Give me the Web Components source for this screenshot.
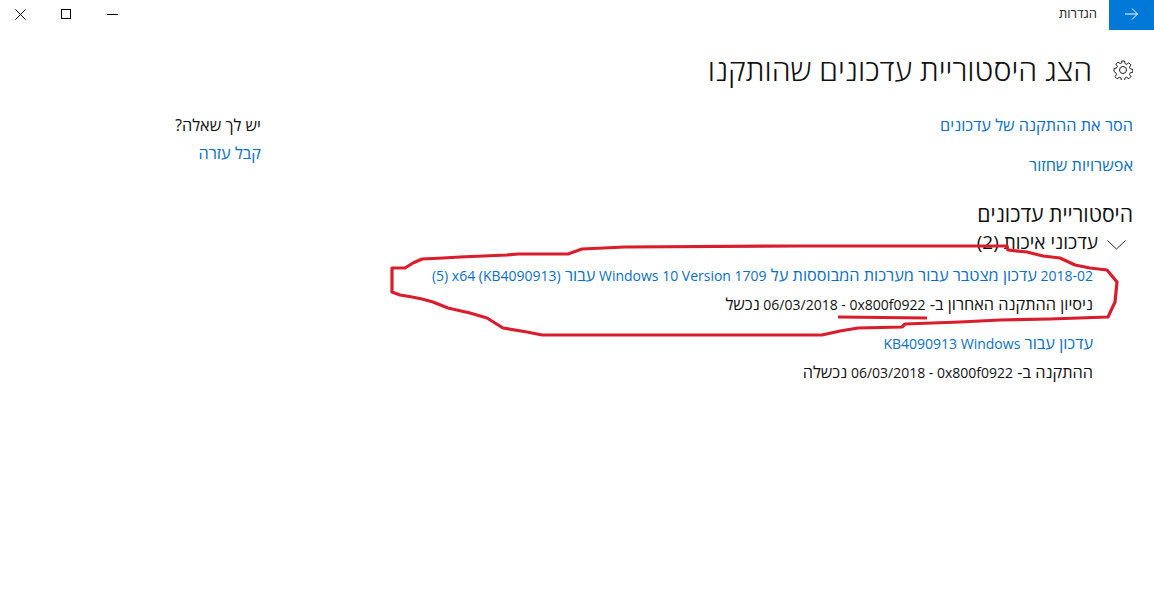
<!DOCTYPE html>
<html lang="he" dir="rtl">
<head>
<meta charset="utf-8">
<title>Update history</title>
<style>
  html, body { margin: 0; padding: 0; background: #fff; }
  body { width: 1154px; height: 593px; overflow: hidden; position: relative; font-family: "Open Sans", "Liberation Sans", sans-serif; color: #000; }
</style>
</head>
<body>

<template id="title-bar-tpl">
  <style>
    :host { display: flex; height: 30px; align-items: stretch; font-size: 13px; }
    .back { width: 45px; background: #0078d7; display: flex; align-items: center; justify-content: center; padding-bottom: 3px; box-sizing: border-box; }
    .label { padding-right: 12px; flex: 1; line-height: 27px; color: #222; }
    .controls { display: flex; margin-left: -3px; padding-bottom: 2px; }
    .controls span { width: 46px; display: flex; align-items: center; justify-content: center; }
    svg { display: block; }
  </style>
  <div class="back">
    <svg width="13" height="12" viewBox="0 0 13 12" fill="none" stroke="#fff" stroke-width="1"><path d="M0 6h12.500M7 .5L12.500 6 7 11.500"/></svg>
  </div>
  <div class="label"><slot></slot></div>
  <div class="controls">
    <span><svg width="11" height="2" viewBox="0 0 11 2"><path d="M0 1.500h11" stroke="#000"/></svg></span>
    <span><svg width="10" height="10" viewBox="0 0 10 10"><rect x=".5" y=".5" width="9" height="9" fill="none" stroke="#000"/></svg></span>
    <span><svg width="11" height="11" viewBox="0 0 11 11"><path d="M.5.5l10 10M10.500.5l-10 10" stroke="#000" fill="none"/></svg></span>
  </div>
</template>

<template id="page-title-tpl">
  <style>
    :host { display: flex; align-items: center; gap: 21px; height: 40px; margin: 20px 21px 0 0; }
    svg { display: block; flex: none; }
    h1 { margin: 0; font-size: 30.400px; font-weight: 300; line-height: 40px; color: #111; }
  </style>
  <svg width="20" height="20" viewBox="0 0 20 20" fill="none" stroke="#222" stroke-width="1"><circle cx="10" cy="10" r="3.500"/><path d="M8.500 1h3l.5 2.600 1.700.7 2.200-1.500 2.100 2.100-1.500 2.200.7 1.700 2.600.5v3l-2.600.5-.7 1.700 1.500 2.200-2.100 2.100-2.200-1.500-1.700.7-.5 2.600h-3l-.5-2.600-1.700-.7-2.200 1.500-2.100-2.100 1.500-2.200-.7-1.700L1 11.500v-3l2.600-.5.7-1.700-1.500-2.200 2.100-2.100 2.200 1.500 1.700-.7z"/></svg>
  <h1><slot></slot></h1>
</template>

<template id="help-panel-tpl">
  <style>
    :host { display: block; width: 261px; margin-right: auto; font-size: 16.300px; line-height: 20px; flex: none; }
    .q { color: #111; margin-bottom: 8px; }
    .l { color: #0a6fc2; }
  </style>
  <div class="q"><slot name="question"></slot></div>
  <div class="l"><slot name="link"></slot></div>
</template>

<template id="latin-text-tpl">
  <style>
    :host { display: inline; font-size: 14px; }
  </style>
  <slot></slot>
</template>

<template id="update-item-tpl">
  <style>
    :host { display: block; margin-right: 40px; font-size: 16.300px; line-height: 20px; }
    .t { color: #0a6fc2; }
    .s { color: #111; margin-top: 8px; }
  </style>
  <div class="t"><slot name="name"></slot></div>
  <div class="s"><slot name="status"></slot></div>
</template>

<template id="update-group-tpl">
  <style>
    :host { display: block; }
    .h { display: flex; align-items: center; gap: 9px; padding-right: 7px; font-size: 19px; line-height: 24px; height: 24px; margin-bottom: 11px; color: #111; }
    svg { display: block; margin-top: 5px; }
    .items { display: flex; flex-direction: column; gap: 18px; }
  </style>
  <div class="h">
    <svg width="19" height="10" viewBox="0 0 19 10" fill="none" stroke="#222"><path d="M.5.500L9.500 9l9-8.500"/></svg>
    <span><slot name="heading"></slot></span>
  </div>
  <div class="items"><slot></slot></div>
</template>

<template id="settings-page-tpl">
  <style>
    :host { display: block; }
    .body { display: flex; padding: 25px 21px 0 0; }
    .main { width: 742px; flex: none; }
    .links { display: flex; flex-direction: column; gap: 20px; font-size: 16.300px; line-height: 20px; color: #0a6fc2; }
    h2 { margin: 25px 0 2px; font-size: 21.200px; font-weight: 400; line-height: 28px; color: #111; }
  </style>
  <slot name="bar"></slot>
  <slot name="title"></slot>
  <div class="body">
    <div class="main">
      <div class="links"><slot name="links"></slot></div>
      <h2><slot name="section"></slot></h2>
      <slot></slot>
    </div>
    <slot name="aside"></slot>
  </div>
</template>

<template id="red-marks-tpl">
  <style>
    :host { position: absolute; left: 0; top: 0; width: 1154px; height: 593px; pointer-events: none; }
    svg { display: block; }
  </style>
  <svg width="1154" height="593" viewBox="0 0 1154 593" fill="none" stroke="#d81e2c" stroke-width="3.200" stroke-linejoin="round">
    <path d="M392 268L405 268L413 263L422 259L443 258L460 257L507 255L518 254L568 254L582 249L625 247L800 246L1007 246L1008 250L1027 252L1043 256L1060 258L1075 265L1090 268L1107 270L1117 282L1115 302L1108 317L1050 319L1000 320L960 322L905 324L902 327L858 328L840 331L822 335L780 335L542 335L527 332L503 328L487 318L470 313L448 308L433 302L422 299L412 297L400 295L392 292Z"/>
    <path d="M838 317L927 318"/>
  </svg>
</template>

<script>
  // every element just clones its own template into an open shadow root
  class TemplatedElement extends HTMLElement {
    constructor() {
      super();
      const tpl = document.getElementById(this.constructor.templateId);
      this.attachShadow({mode: 'open'}).append(tpl.content.cloneNode(true));
    }
  }
  const defs = {
    'title-bar': 'title-bar-tpl',
    'page-title': 'page-title-tpl',
    'help-panel': 'help-panel-tpl',
    'latin-text': 'latin-text-tpl',
    'update-item': 'update-item-tpl',
    'update-group': 'update-group-tpl',
    'settings-page': 'settings-page-tpl',
    'red-marks': 'red-marks-tpl'
  };
  Object.entries(defs).forEach(([name, templateId]) => {
    customElements.define(name, class extends TemplatedElement {
      static templateId = templateId;
    });
  });
</script>

<settings-page>
  <title-bar slot="bar">הגדרות</title-bar>
  <page-title slot="title">הצג היסטוריית עדכונים שהותקנו</page-title>
  <span slot="links">הסר את ההתקנה של עדכונים</span>
  <span slot="links">אפשרויות שחזור</span>
  <span slot="section">היסטוריית עדכונים</span>
  <update-group>
    <span slot="heading">עדכוני איכות (2)</span>
    <update-item>
      <span slot="name"><latin-text>2018-02</latin-text> עדכון מצטבר עבור מערכות המבוססות על <latin-text>Windows 10 Version 1709</latin-text> עבור <latin-text>x64 (KB4090913) &#x200F;(5)</latin-text></span>
      <span slot="status">ניסיון ההתקנה האחרון ב- <latin-text>0x800f0922 &#x200F;-&#x200F; 06/03/2018</latin-text> נכשל</span>
    </update-item>
    <update-item>
      <span slot="name">עדכון עבור <latin-text>Windows&#x200F; KB4090913</latin-text></span>
      <span slot="status">ההתקנה ב- <latin-text>0x800f0922 &#x200F;-&#x200F; 06/03/2018</latin-text> נכשלה</span>
    </update-item>
  </update-group>
  <help-panel slot="aside">
    <span slot="question">יש לך שאלה?</span>
    <span slot="link">קבל עזרה</span>
  </help-panel>
</settings-page>
<red-marks></red-marks>

</body>
</html>
